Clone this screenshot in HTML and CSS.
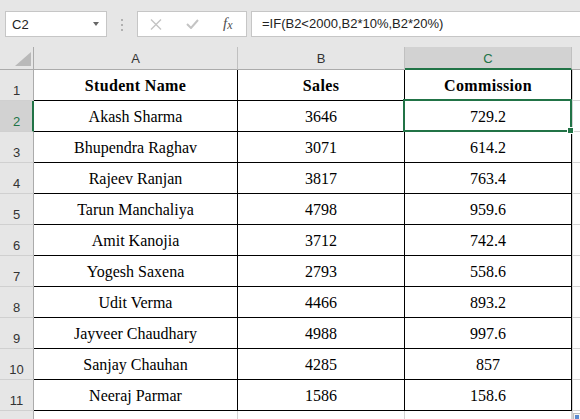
FILE: index.html
```html
<!DOCTYPE html>
<html>
<head>
<meta charset="utf-8">
<title>Sheet</title>
<link rel="stylesheet" href="styles.css">
</head>
<body>
<div class="toolbar">
  <div class="namebox"><span class="ref">C2</span><span class="caret"></span></div>
  <div class="dots"><i></i><i></i><i></i></div>
  <div class="fxbox">
    <svg class="ico-x" width="12" height="11" viewBox="0 0 12 11"><path d="M1 0.5 L11 10.5 M11 0.5 L1 10.5" stroke="#c4c4c4" stroke-width="1.4" fill="none"/></svg>
    <svg class="ico-ok" width="13" height="10" viewBox="0 0 13 10"><path d="M1 5 L5 9 L12 1" stroke="#c4c4c4" stroke-width="2" fill="none"/></svg>
    <span class="fx">f<span class="fx-x">x</span></span>
  </div>
  <div class="formula">=IF(B2&lt;2000,B2*10%,B2*20%)</div>
</div>
<div class="sheet">
  <div class="corner"><span class="tri"></span></div>
  <div class="ch">A</div>
  <div class="ch">B</div>
  <div class="ch sel">C</div>
  <div class="ch last"></div>

  <div class="rh">1</div>
  <div class="c b">Student Name</div>
  <div class="c b">Sales</div>
  <div class="c b">Commission</div>
  <div class="d"></div>

  <div class="rh sel">2</div>
  <div class="c">Akash Sharma</div>
  <div class="c">3646</div>
  <div class="c">729.2</div>
  <div class="d"></div>

  <div class="rh">3</div>
  <div class="c">Bhupendra Raghav</div>
  <div class="c">3071</div>
  <div class="c">614.2</div>
  <div class="d"></div>

  <div class="rh">4</div>
  <div class="c">Rajeev Ranjan</div>
  <div class="c">3817</div>
  <div class="c">763.4</div>
  <div class="d"></div>

  <div class="rh">5</div>
  <div class="c">Tarun Manchaliya</div>
  <div class="c">4798</div>
  <div class="c">959.6</div>
  <div class="d"></div>

  <div class="rh">6</div>
  <div class="c">Amit Kanojia</div>
  <div class="c">3712</div>
  <div class="c">742.4</div>
  <div class="d"></div>

  <div class="rh">7</div>
  <div class="c">Yogesh Saxena</div>
  <div class="c">2793</div>
  <div class="c">558.6</div>
  <div class="d"></div>

  <div class="rh">8</div>
  <div class="c">Udit Verma</div>
  <div class="c">4466</div>
  <div class="c">893.2</div>
  <div class="d"></div>

  <div class="rh">9</div>
  <div class="c">Jayveer Chaudhary</div>
  <div class="c">4988</div>
  <div class="c">997.6</div>
  <div class="d"></div>

  <div class="rh">10</div>
  <div class="c">Sanjay Chauhan</div>
  <div class="c">4285</div>
  <div class="c">857</div>
  <div class="d"></div>

  <div class="rh">11</div>
  <div class="c">Neeraj Parmar</div>
  <div class="c">1586</div>
  <div class="c">158.6</div>
  <div class="d"></div>

  <div class="rh">12</div>
  <div class="e"></div>
  <div class="e"></div>
  <div class="e"></div>
  <div class="d"></div>
</div>
<div class="selection"><span class="handle"></span></div>
<div class="corner-btn"><span></span></div>
</body>
</html>
```

FILE: styles.css
```css
html, body {
  margin: 0;
  padding: 0;
  width: 580px;
  height: 419px;
  overflow: hidden;
  background: #ffffff;
  font-family: "Liberation Sans", Arial, sans-serif;
  position: relative;
}

.toolbar {
  height: 47px;
  box-sizing: border-box;
  padding: 11px 0 0 5px;
  background: #e6e6e6;
  display: flex;
  align-items: flex-start;
  overflow: hidden;
}

.namebox {
  width: 102px;
  height: 26px;
  box-sizing: border-box;
  border: 1px solid #c6c6c6;
  background: #ffffff;
  display: flex;
  align-items: center;
  justify-content: space-between;
  padding: 1px 7px 0 6px;
  font-size: 13px;
  color: #222222;
}

.caret {
  width: 0;
  height: 0;
  border-left: 3px solid transparent;
  border-right: 3px solid transparent;
  border-top: 4px solid #666666;
  margin-top: -2px;
}

.dots {
  width: 30px;
  height: 26px;
  display: flex;
  flex-direction: column;
  align-items: center;
  justify-content: center;
  gap: 3px;
  padding-top: 1px;
  box-sizing: border-box;
}

.dots i {
  display: block;
  width: 2px;
  height: 2px;
  background: #b0b0b0;
}

.fxbox {
  width: 110px;
  height: 26px;
  box-sizing: border-box;
  border: 1px solid #c6c6c6;
  background: #ffffff;
  display: flex;
  align-items: center;
  gap: 24px;
  padding-left: 12px;
  margin-right: 4px;
}

.ico-x, .ico-ok {
  display: block;
}

.fx {
  font-family: "Liberation Serif", "Times New Roman", serif;
  font-style: italic;
  font-size: 15px;
  color: #505050;
  line-height: 1;
  margin-top: -2px;
}

.fx-x {
  font-size: 12px;
  position: relative;
  top: 1px;
}

.formula {
  flex: 1;
  height: 26px;
  box-sizing: border-box;
  border: 1px solid #c6c6c6;
  border-right: none;
  background: #ffffff;
  padding: 4px 0 0 10px;
  font-size: 13px;
  line-height: 16px;
  color: #222222;
  white-space: nowrap;
}

.sheet {
  display: grid;
  grid-template-columns: 34px 204px 167px 167px 1fr;
  grid-template-rows: 23px repeat(12, 31px);
}

.corner, .ch, .rh, .c, .e, .d {
  box-sizing: border-box;
}

.corner {
  background: #e6e6e6;
  border-right: 1px solid #ababab;
  border-bottom: 1px solid #ababab;
  position: relative;
  display: flex;
  align-items: flex-end;
  justify-content: flex-end;
  padding: 0 2px 3px 0;
}

.tri {
  width: 0;
  height: 0;
  border-left: 16px solid transparent;
  border-bottom: 14px solid #b9b9b9;
}

.ch {
  background: #e6e6e6;
  border-right: 1px solid #c0c0c0;
  border-bottom: 1px solid #ababab;
  display: flex;
  align-items: center;
  justify-content: center;
  font-size: 13px;
  line-height: 15px;
  color: #333333;
}

.ch.sel {
  background: #d2d2d2;
  color: #217346;
  border-bottom: 2px solid #217346;
  padding-top: 1px;
}

.ch.last {
  border-right: none;
}

.rh {
  background: #e6e6e6;
  border-right: 1px solid #ababab;
  border-bottom: 1px solid #d0d0d0;
  display: flex;
  align-items: flex-end;
  justify-content: center;
  padding-bottom: 2px;
  font-size: 13px;
  line-height: 15px;
  color: #333333;
}

.rh.sel {
  background: #d2d2d2;
  color: #217346;
  border-right: 2px solid #217346;
  padding-left: 1px;
}

.c {
  border-right: 1px solid #000000;
  border-bottom: 1px solid #000000;
  display: flex;
  align-items: center;
  justify-content: center;
  padding-top: 2px;
  font-family: "Liberation Serif", "Times New Roman", serif;
  font-size: 16px;
  line-height: 18px;
  color: #000000;
  white-space: nowrap;
}

.c.b {
  font-weight: bold;
  letter-spacing: 0.35px;
}

.e {
  border-right: 1px solid #d4d4d4;
  border-bottom: 1px solid #d4d4d4;
}

.d {
  border-left: 1px solid #d4d4d4;
  border-bottom: 1px solid #d4d4d4;
}

.selection {
  position: absolute;
  left: 403px;
  top: 99px;
  width: 169px;
  height: 33px;
  box-sizing: border-box;
  border: 2px solid #217346;
}

.handle {
  position: absolute;
  right: -4px;
  bottom: -4px;
  width: 5px;
  height: 5px;
  background: #217346;
  border: 1px solid #ffffff;
}

.corner-btn {
  position: absolute;
  left: 573px;
  top: 413px;
  width: 8px;
  height: 8px;
  box-sizing: border-box;
  border: 1px solid #bfbfbf;
  background: #f4f4f4;
  padding: 1px;
}

.corner-btn span {
  display: block;
  width: 4px;
  height: 4px;
  background: #5b8bd0;
}
```
